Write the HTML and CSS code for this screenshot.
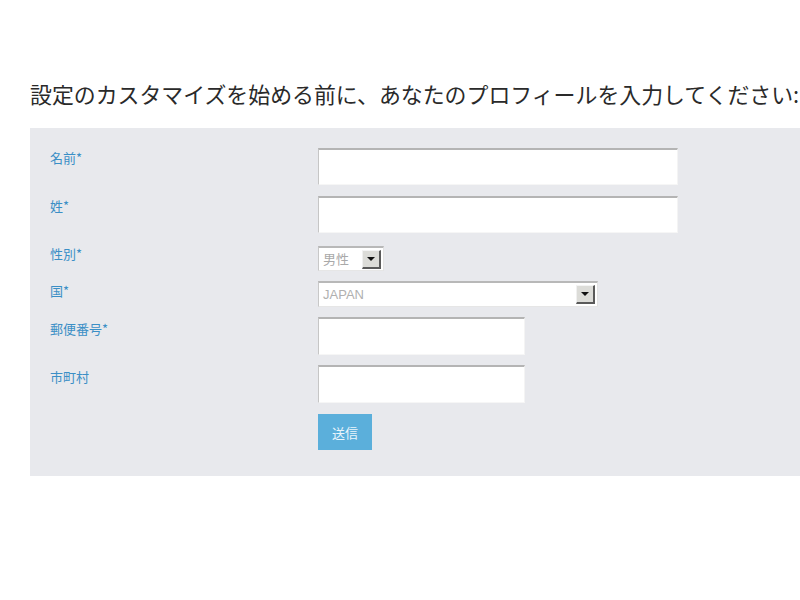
FILE: index.html
```html
<!DOCTYPE html>
<html lang="ja">
<head>
<meta charset="utf-8">
<title>プロフィール</title>
<link rel="stylesheet" href="styles.css">
</head>
<body>
<div class="page">
  <h1 class="title">設定のカスタマイズを始める前に、あなたのプロフィールを入力してください:</h1>
  <form class="panel">
    <div class="row row-name">
      <label class="lbl">名前*</label>
      <div class="field"><input class="txt txt-long" type="text"></div>
    </div>
    <div class="row row-sur">
      <label class="lbl">姓*</label>
      <div class="field"><input class="txt txt-long" type="text"></div>
    </div>
    <div class="row row-gender">
      <label class="lbl lbl-tight">性別*</label>
      <div class="field">
        <div class="sel sel-gender"><span class="sel-val">男性</span><span class="sel-btn"><span class="tri"></span></span></div>
      </div>
    </div>
    <div class="row row-country">
      <label class="lbl">国*</label>
      <div class="field">
        <div class="sel sel-country"><span class="sel-val sel-latin">JAPAN</span><span class="sel-btn"><span class="tri"></span></span></div>
      </div>
    </div>
    <div class="row row-zip">
      <label class="lbl lbl-low">郵便番号*</label>
      <div class="field"><input class="txt txt-short" type="text"></div>
    </div>
    <div class="row row-city">
      <label class="lbl lbl-low">市町村</label>
      <div class="field"><input class="txt txt-short" type="text"></div>
    </div>
    <div class="row row-submit">
      <span class="lbl"></span>
      <div class="field"><button class="btn" type="button">送信</button></div>
    </div>
  </form>
</div>
</body>
</html>
```

FILE: styles.css
```css
html, body {
  margin: 0;
  padding: 0;
  background: #ffffff;
}
body {
  font-family: "Noto Sans CJK JP", "Noto Sans", sans-serif;
  overflow: hidden;
}
.page {
  padding: 80px 0 0 30px;
}
.title {
  margin: 0 0 20px 0;
  font-size: 21.9px;
  line-height: 28px;
  font-weight: normal;
  color: #2a2a2a;
  white-space: nowrap;
}
.panel {
  background: #e8e9ed;
  padding: 20px 0 26px 20px;
  display: flex;
  flex-direction: column;
}
.row {
  display: flex;
  align-items: flex-start;
}
.row-name { margin-bottom: 11px; }
.row-sur { margin-bottom: 13px; }
.row-gender { margin-bottom: 10px; }
.row-country { margin-bottom: 10px; }
.row-zip { margin-bottom: 10px; }
.row-city { margin-bottom: 11px; }
.lbl {
  width: 268px;
  flex: none;
  font-size: 13px;
  line-height: 16px;
  color: #3b8fc6;
  padding-top: 2px;
}
.lbl-tight { padding-top: 0; }
.lbl-low { padding-top: 4px; }
.field {
  display: flex;
}
.txt {
  box-sizing: border-box;
  margin: 0;
  background: #ffffff;
  border-style: solid;
  border-width: 2px 1px 1px 1px;
  border-color: #b4b4b4 #f4f4f4 #f6f6f6 #c6c6c6;
  outline: none;
  padding: 0 4px;
  font-family: inherit;
}
.txt-long { width: 360px; height: 37px; }
.txt-short { width: 207px; height: 38px; }
.sel {
  box-sizing: border-box;
  display: flex;
  align-items: center;
  justify-content: space-between;
  background: #ffffff;
  border-style: solid;
  border-width: 2px 1px 1px 1px;
  border-color: #b8b8b8 #e2e2e2 #e6e6e6 #c8c8c8;
  padding: 0 2px 0 4px;
}
.sel-gender { width: 66px; height: 25px; }
.sel-country { width: 280px; height: 26px; }
.sel-val {
  font-size: 13px;
  color: #a9a9a9;
  line-height: 16px;
}
.sel-latin {
  font-family: "Liberation Sans", Arial, sans-serif;
  font-size: 13px;
  color: #b0b0b0;
}
.sel-btn {
  box-sizing: border-box;
  width: 19px;
  height: 19px;
  background: #dcdcd8;
  border-style: solid;
  border-width: 1px 2px 2px 1px;
  border-color: #f4f4f4 #5a5a5a #5a5a5a #f0f0f0;
  display: flex;
  align-items: center;
  justify-content: center;
}
.tri {
  width: 0;
  height: 0;
  border-left: 4px solid transparent;
  border-right: 4px solid transparent;
  border-top: 4px solid #111111;
}
.btn {
  width: 54px;
  height: 36px;
  margin: 0;
  border: none;
  background: #5bafdb;
  color: #eaf5fb;
  font-family: inherit;
  font-size: 13px;
  padding: 0;
}
```
